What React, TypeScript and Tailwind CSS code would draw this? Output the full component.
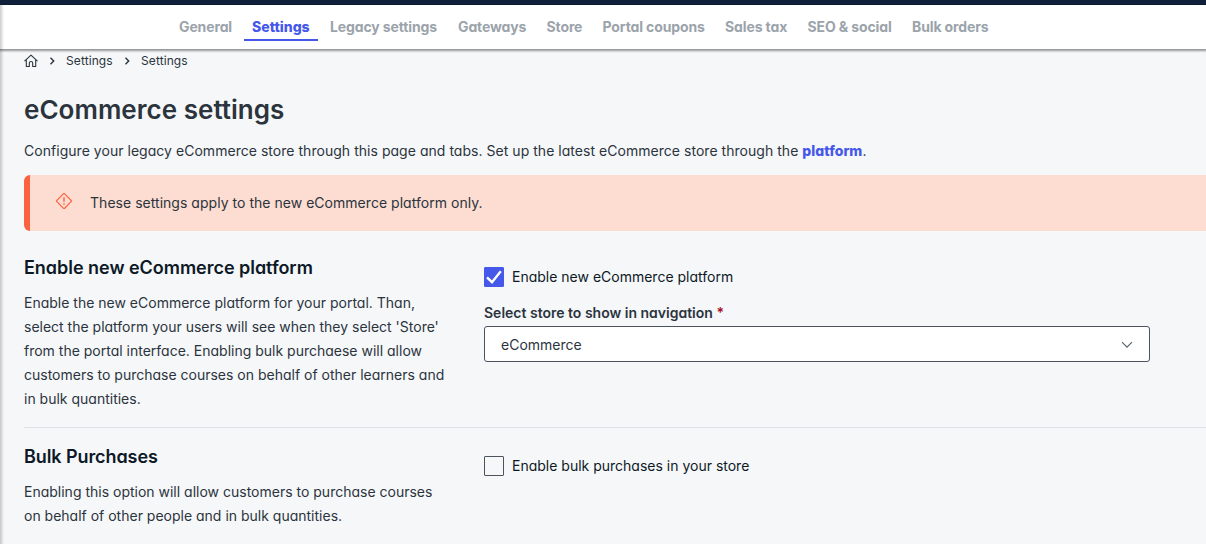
import React from 'react';

const tabs = [
  { label: 'General', width: 'w-[53px]' },
  { label: 'Settings', width: 'w-[58px]', active: true },
  { label: 'Legacy settings', width: 'w-[108px]' },
  { label: 'Gateways', width: 'w-[68.5px]' },
  { label: 'Store', width: 'w-[36px]' },
  { label: 'Portal coupons', width: 'w-[102.5px]' },
  { label: 'Sales tax', width: 'w-[62.5px]' },
  { label: 'SEO & social', width: 'w-[84.5px]' },
  { label: 'Bulk orders', width: 'w-[77px]' },
];

function Tabs() {
  return (
    <nav className="relative z-10 flex h-11 gap-1 bg-white pt-2 pl-[171px] text-sm leading-7 shadow-[0_1px_2px_1px_rgba(0,0,0,0.4)]">
      {tabs.map((tab) => (
        <a
          key={tab.label}
          href="#"
          className={`box-content h-[26px] border-b-2 px-2 whitespace-nowrap ${tab.width} ${
            tab.active
              ? 'border-[#4558e9] font-extrabold text-[#4558e9]'
              : 'border-transparent font-bold tracking-[-0.12px] text-[#9ba3ab]'
          }`}
        >
          {tab.label}
        </a>
      ))}
    </nav>
  );
}

function Separator() {
  return (
    <svg className="ml-[10px] h-3 w-3" viewBox="0 0 12 12" fill="none" stroke="currentColor" strokeWidth="1.4">
      <path d="M2.500 2.800 5.700 6 2.500 9.200" />
    </svg>
  );
}

function Breadcrumbs() {
  return (
    <div className="flex h-6 items-center text-xs text-[#2b343d]">
      <svg className="h-[14px] w-[14px]" viewBox="0 0 14 14" fill="none" stroke="currentColor" strokeWidth="1.1" strokeLinejoin="round">
        <path d="M.5 7.2 7 1.2l6.500 6M2.300 5.800v6.700h3V9.200a1.700 1.700 0 0 1 3.400 0v3.300h3V5.800" />
      </svg>
      <Separator />
      <span className="ml-[6px] w-[47px] tracking-[0.1px] whitespace-nowrap">Settings</span>
      <Separator />
      <span className="ml-[6px] tracking-[0.1px] whitespace-nowrap">Settings</span>
    </div>
  );
}

function Alert() {
  return (
    <div className="flex h-14 items-center rounded-l-md border-l-[6px] border-[#fb6340] bg-[#fdddd1] pl-[26px]">
      <svg className="mb-1 h-4 w-4" viewBox="0 0 16 16" fill="none" stroke="#fb6340" strokeWidth="1.2">
        <path d="M7.300.8.900 7.300a1 1 0 0 0 0 1.400l6.400 6.500a1 1 0 0 0 1.400 0l6.400-6.500a1 1 0 0 0 0-1.400L8.700.8a1 1 0 0 0-1.400 0Z" />
        <path d="M8 4.200v4.500M8 10.200v1.600" strokeWidth="1.500" />
      </svg>
      <span className="ml-[18px] tracking-[0.03px]">These settings apply to the new eCommerce platform only.</span>
    </div>
  );
}

function Checkbox({ label, checked = false }: { label: string; checked?: boolean }) {
  return (
    <label className="flex h-5 items-center gap-2 text-[#0d1926]">
      <span
        className={`flex h-5 w-5 items-center justify-center rounded-[1px] border ${
          checked ? 'border-[#4558e9] bg-[#4558e9]' : 'border-[#4b545e]'
        }`}
      >
        {checked && (
          <svg className="h-5 w-5 shrink-0" viewBox="0 0 20 20" fill="none" stroke="white" strokeWidth="2.400">
            <path d="m3 10.300 5 4.900L16.800 4.200" />
          </svg>
        )}
      </span>
      {label}
    </label>
  );
}

function App() {
  return (
    <div className="relative h-[544px] overflow-hidden bg-[#f6f7f9] font-['Inter','Liberation_Sans',sans-serif] text-sm text-[#2b343d] [font-feature-settings:'cv11']">
      <div className="h-[5px] bg-[#0f203b]" />
      <Tabs />
      <main className="pl-6">
        <Breadcrumbs />
        <h1 className="mt-[17px] text-[26px] leading-10 font-semibold tracking-[0.03px]">eCommerce settings</h1>
        <p className="mt-[9px] leading-6 tracking-[0.035px]">
          Configure your legacy eCommerce store through this page and tabs. Set up the latest eCommerce store through the{' '}
          <a href="#" className="font-extrabold text-[#4558e9]">platform</a>.
        </p>
        <div className="mt-3">
          <Alert />
        </div>

        <section className="flex h-[197px] gap-10 border-b border-[#dfe1e4] pt-[25px]">
          <div className="w-[420px] whitespace-nowrap">
            <h2 className="text-lg leading-6 font-semibold tracking-[-0.03px] text-[#0d1926]">Enable new eCommerce platform</h2>
            <p className="mt-[11px] leading-6">
              Enable the new eCommerce platform for your portal. Than,<br />
              select the platform your users will see when they select 'Store'<br />
              from the portal interface. Enabling bulk purchaese will allow<br />
              customers to purchase courses on behalf of other learners and<br />
              in bulk quantities.
            </p>
          </div>
          <div className="w-[666px] pt-[11px]">
            <Checkbox label="Enable new eCommerce platform" checked />
            <div className="mt-4 leading-5 font-semibold">
              Select store to show in navigation <span className="text-[#a50d1b]">*</span>
            </div>
            <button className="mt-[3px] flex h-9 w-full items-center justify-between rounded-[3px] border border-[#4b545e] bg-white px-4">
              <span className="pt-0.5">eCommerce</span>
              <svg className="h-3 w-3" viewBox="0 0 12 12" fill="none" stroke="#59626a" strokeWidth="1.200">
                <path d="m1 4.200 5 5 5-5" />
              </svg>
            </button>
          </div>
        </section>

        <section className="flex gap-10 pt-[17px]">
          <div className="w-[420px] whitespace-nowrap">
            <h2 className="text-lg leading-6 font-semibold tracking-[-0.08px] text-[#0d1926]">Bulk Purchases</h2>
            <p className="mt-[11px] leading-6">
              Enabling this option will allow customers to purchase courses<br />
              on behalf of other people and in bulk quantities.
            </p>
          </div>
          <div className="pt-[11px]">
            <Checkbox label="Enable bulk purchases in your store" />
          </div>
        </section>
      </main>
      {/* shadow cast by the side menu */}
      <div className="absolute top-[5px] bottom-0 left-0 z-20 w-1 bg-linear-to-r from-black/20 to-transparent" />
    </div>
  );
}

export default App;
